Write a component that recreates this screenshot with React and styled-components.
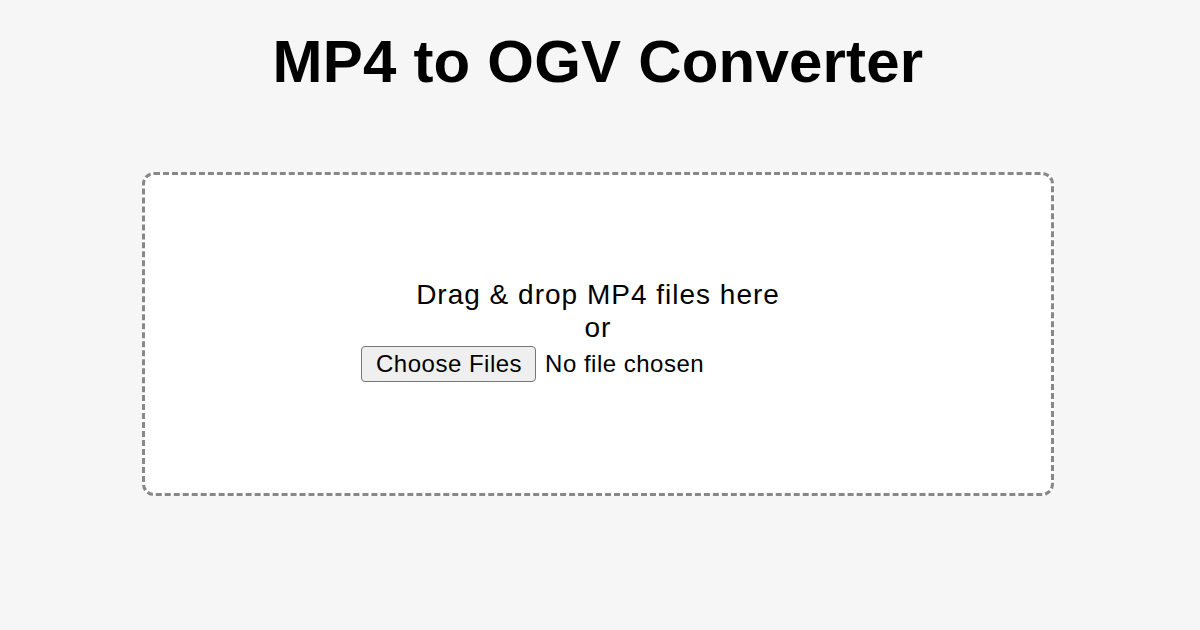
import React from "react";
import styled, { createGlobalStyle } from "styled-components";

const GlobalStyle = createGlobalStyle`
  html, body {
    margin: 0;
    padding: 0;
    background: #f6f6f6;
    font-family: "Liberation Sans", Arial, sans-serif;
    color: #000;
  }
`;

function App() {
  return (
    <Page>
      <GlobalStyle />
      <Title>MP4 to OGV Converter</Title>
      <DropZone>
        <Prompt>Drag &amp; drop MP4 files here</Prompt>
        <Prompt>or</Prompt>
        <FileRow>
          <FileButton>
            Choose Files
            <HiddenInput type="file" accept="video/mp4" multiple />
          </FileButton>
          <FileStatus>No file chosen</FileStatus>
        </FileRow>
      </DropZone>
    </Page>
  );
}

/* Styles */
const Page = styled.main`
  display: flex;
  flex-direction: column;
  align-items: center;
  min-height: 630px;
  padding: 26px 4px 0 0;
  box-sizing: border-box;
`;

const Title = styled.h1`
  margin: 0 0 74px;
  font-size: 60px;
  font-weight: 700;
  line-height: 72px;
  letter-spacing: 0.2px;
`;

const DropZone = styled.section`
  width: 912px;
  height: 324px;
  box-sizing: border-box;
  border: 3px dashed #888;
  border-radius: 12px;
  background: #fff;
  display: flex;
  flex-direction: column;
  align-items: center;
  justify-content: center;
  padding-bottom: 8px;
`;

const Prompt = styled.p`
  margin: 0;
  font-size: 28px;
  line-height: 33px;
  letter-spacing: 1px;
`;

const FileRow = styled.div`
  width: 474px;
  display: flex;
  align-items: center;
  gap: 9px;
  margin-top: 2px;
`;

const FileButton = styled.label`
  display: inline-flex;
  align-items: center;
  height: 36px;
  padding: 0 13px 0 14px;
  box-sizing: border-box;
  background: #efefef;
  border: 1px solid #767676;
  border-radius: 4px;
  font-size: 24px;
  letter-spacing: 0.5px;
  cursor: pointer;
`;

const HiddenInput = styled.input`
  display: none;
`;

const FileStatus = styled.span`
  font-size: 24px;
  letter-spacing: 0.5px;
`;

export default App;
